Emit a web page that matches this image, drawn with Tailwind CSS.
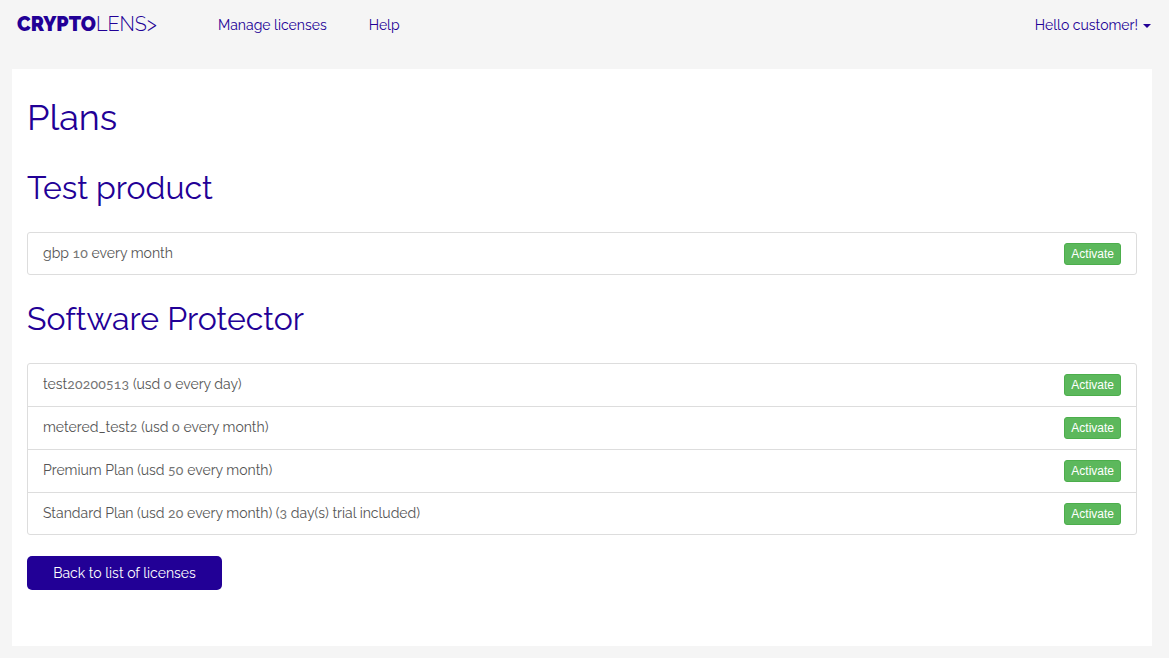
<!DOCTYPE html>
<html lang="en-US">
<head>
<script src="https://cdn.jsdelivr.net/npm/@tailwindcss/browser@4"></script>
<title>Plans</title>
</head>
<body class="bg-[#f5f5f5] font-['Raleway','Lato','Open_Sans',sans-serif] text-[14px] text-[#555555]">

  <!-- Navbar -->
  <nav class="h-[50px] flex items-center justify-between pl-[17px] pr-[18px] text-[#220096]">
    <div class="flex items-center">
      <div class="w-[201px] text-[19.8px] leading-none whitespace-nowrap"><span class="font-black">CRYPTO</span><span class="font-light">LENS&gt;</span></div>
      <a class="mr-[42px]">Manage licenses</a>
      <a>Help</a>
    </div>
    <a class="flex items-center gap-[5px]">Hello customer!
      <span class="w-0 h-0 border-x-4 border-x-transparent border-t-4 border-t-[#220096] mt-[2px]"></span>
    </a>
  </nav>

  <!-- Content -->
  <main class="ml-[12px] mr-[17px] mt-[19px] bg-white h-[577px] px-[15px] pt-[26px]">
    <h1 class="text-[36px] leading-[44px] text-[#220096]">Plans</h1>
    <h2 class="text-[32px] leading-[40px] text-[#220096] mt-[29px] mb-[24px]">Test product</h2>

    <ul class="border border-[#dddddd] rounded-[3px]">
      <li class="h-[41px] flex items-center justify-between px-[15px]"><span class="leading-[20px] mb-[2px]">gbp <span class="font-['Lato'] oldstyle-nums tracking-[0.2px] text-[#757575]">10</span> every month</span>
        <button class="bg-[#5cb85c] border border-[#4cae4c] text-white font-['Liberation_Sans',sans-serif] text-[12px] leading-[20px] px-[6px] rounded-[3px]">Activate</button>
      </li>
    </ul>

    <h2 class="text-[32px] leading-[40px] text-[#220096] mt-[24px] mb-[24px]">Software Protector</h2>

    <ul class="border border-[#dddddd] rounded-[3px] divide-y divide-[#dddddd]">
      <li class="h-[43px] flex items-center justify-between px-[15px]"><span class="leading-[20px] mb-[2px]">test<span class="font-['Lato'] oldstyle-nums tracking-[0.2px] text-[#757575]">20200513</span> (usd <span class="font-['Lato'] oldstyle-nums tracking-[0.2px] text-[#757575]">0</span> every day)</span>
        <button class="bg-[#5cb85c] border border-[#4cae4c] text-white font-['Liberation_Sans',sans-serif] text-[12px] leading-[20px] px-[6px] rounded-[3px]">Activate</button>
      </li>
      <li class="h-[43px] flex items-center justify-between px-[15px]"><span class="leading-[20px] mb-[2px]">metered_test<span class="font-['Lato'] oldstyle-nums tracking-[0.2px] text-[#757575]">2</span> (usd <span class="font-['Lato'] oldstyle-nums tracking-[0.2px] text-[#757575]">0</span> every month)</span>
        <button class="bg-[#5cb85c] border border-[#4cae4c] text-white font-['Liberation_Sans',sans-serif] text-[12px] leading-[20px] px-[6px] rounded-[3px]">Activate</button>
      </li>
      <li class="h-[43px] flex items-center justify-between px-[15px]"><span class="leading-[20px] mb-[2px]">Premium Plan (usd <span class="font-['Lato'] oldstyle-nums tracking-[0.2px] text-[#757575]">50</span> every month)</span>
        <button class="bg-[#5cb85c] border border-[#4cae4c] text-white font-['Liberation_Sans',sans-serif] text-[12px] leading-[20px] px-[6px] rounded-[3px]">Activate</button>
      </li>
      <li class="h-[41px] flex items-center justify-between px-[15px]"><span class="leading-[20px] mb-[2px]">Standard Plan (usd <span class="font-['Lato'] oldstyle-nums tracking-[0.2px] text-[#757575]">20</span> every month) (<span class="font-['Lato'] oldstyle-nums tracking-[0.2px] text-[#757575]">3</span> day(s) trial included)</span>
        <button class="bg-[#5cb85c] border border-[#4cae4c] text-white font-['Liberation_Sans',sans-serif] text-[12px] leading-[20px] px-[6px] rounded-[3px]">Activate</button>
      </li>
    </ul>

    <button class="mt-[21px] w-[195px] h-[34px] bg-[#220096] text-white rounded-[5px]">Back to list of licenses</button>
  </main>
</body>
</html>
